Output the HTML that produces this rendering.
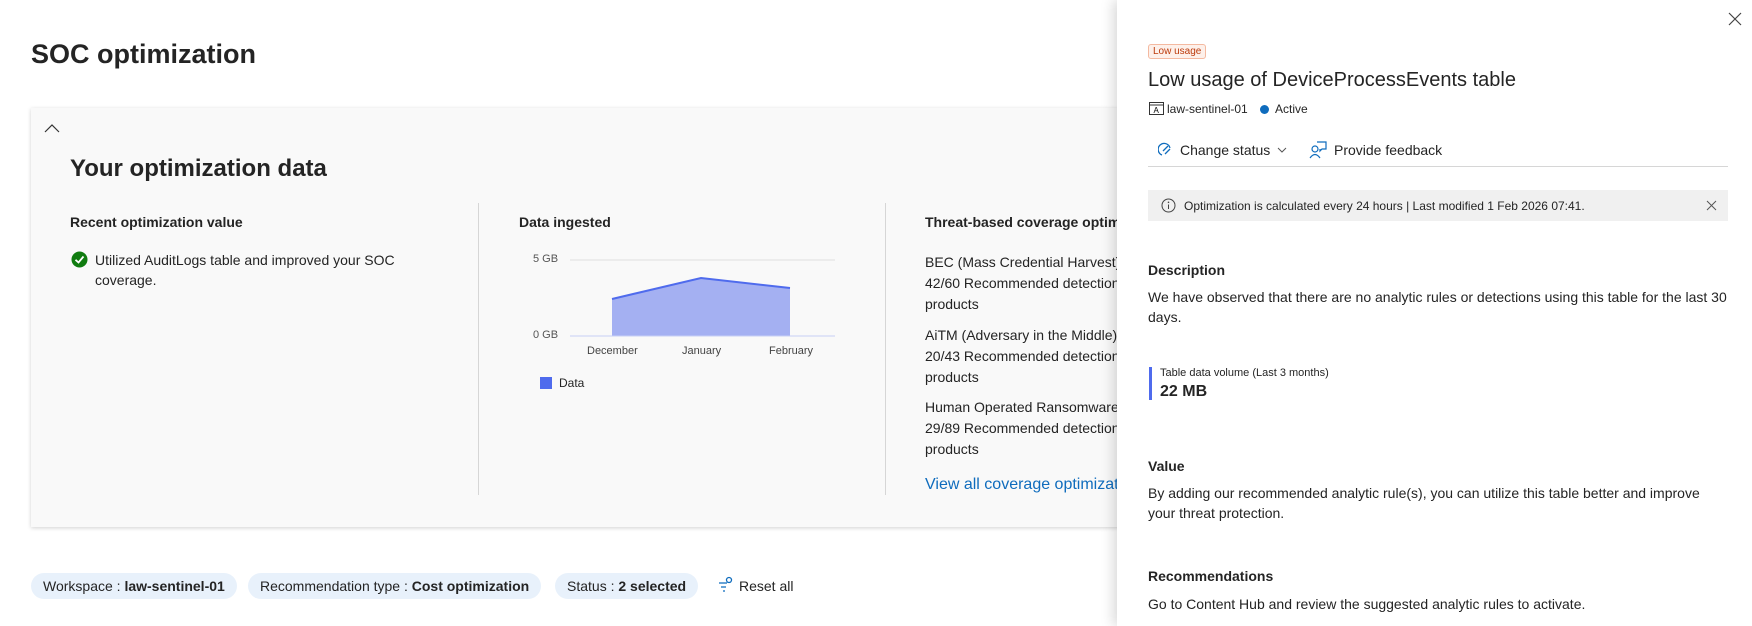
<!DOCTYPE html>
<html><head><meta charset="utf-8"><style>
*{margin:0;padding:0;box-sizing:border-box}
body{width:1752px;height:626px;overflow:hidden;background:#fff;font-family:"Liberation Sans",sans-serif;color:#242424;position:relative}
.a{position:absolute;white-space:nowrap}
.card{position:absolute;left:31px;top:108px;width:1100px;height:419px;background:#f9f9f9;box-shadow:0 1px 4px rgba(0,0,0,.18)}
.h{font-weight:bold;font-size:14px}
.t{font-size:14px;line-height:20px}
.pill{position:absolute;top:573px;height:26px;border-radius:13px;background:#e8f1fb;font-size:14px;line-height:26px;padding:0 12px}
.panel{position:absolute;left:1117px;top:0;width:635px;height:626px;background:#fff;box-shadow:-4px 0 12px rgba(0,0,0,.15)}
</style></head><body>
<div class="a" style="left:31px;top:39px;font-size:27px;font-weight:bold">SOC optimization</div>
<div class="card">
<svg class="a" style="left:12px;top:14px" width="18" height="12"><path d="M2 10 L9 3 L16 10" stroke="#333" fill="none" stroke-width="1.2"/></svg>
<div class="a" style="left:39px;top:47px;font-size:24px;font-weight:bold">Your optimization data</div>
<div class="a h" style="left:39px;top:106px">Recent optimization value</div>
<svg class="a" style="left:40px;top:143px" width="17" height="17"><circle cx="8.5" cy="8.5" r="8" fill="#107c10"/><path d="M4.5 8.8 L7.5 11.5 L12.5 5.5" stroke="#fff" stroke-width="1.8" fill="none"/></svg>
<div class="a t" style="left:64px;top:142px">Utilized AuditLogs table and improved your SOC<br>coverage.</div>
<div class="a" style="left:447px;top:95px;width:1px;height:292px;background:#d6d6d6"></div>
<div class="a" style="left:854px;top:95px;width:1px;height:292px;background:#d6d6d6"></div>
<div class="a h" style="left:488px;top:106px">Data ingested</div>
<div class="a" style="left:502px;top:145px;font-size:11px;color:#555">5 GB</div>
<div class="a" style="left:502px;top:221px;font-size:11px;color:#555">0 GB</div>
<svg class="a" style="left:539px;top:150px" width="270" height="90"><line x1="0" y1="2" x2="265" y2="2" stroke="#e0e0e0"/><polygon points="42,41 131,20 220,30 220,78 42,78" fill="#a4b0f2"/><polyline points="42,41 131,20 220,30" stroke="#4f6bed" stroke-width="2" fill="none"/><line x1="0" y1="78" x2="265" y2="78" stroke="#c8d0f5"/></svg>
<div class="a" style="left:556px;top:237px;font-size:11px;color:#444">December</div>
<div class="a" style="left:651px;top:237px;font-size:11px;color:#444">January</div>
<div class="a" style="left:738px;top:237px;font-size:11px;color:#444">February</div>
<div class="a" style="left:509px;top:269px;width:12px;height:12px;background:#4f6bed"></div>
<div class="a" style="left:528px;top:268px;font-size:12px">Data</div>
<div class="a h" style="left:894px;top:106px">Threat-based coverage optimization</div>
<div class="a t" style="left:894px;top:144px;line-height:21px">BEC (Mass Credential Harvest) | Identity<br>42/60 Recommended detections active across<br>products</div>
<div class="a t" style="left:894px;top:217px;line-height:21px">AiTM (Adversary in the Middle) | Identity<br>20/43 Recommended detections active across<br>products</div>
<div class="a t" style="left:894px;top:289px;line-height:21px">Human Operated Ransomware | Endpoint<br>29/89 Recommended detections active across<br>products</div>
<div class="a" style="left:894px;top:368px;font-size:16px;color:#0f6cbd">View all coverage optimizations</div>
</div>
<div class="pill" style="left:31px">Workspace : <b>law-sentinel-01</b></div>
<div class="pill" style="left:248px">Recommendation type : <b>Cost optimization</b></div>
<div class="pill" style="left:555px">Status : <b>2 selected</b></div>
<svg class="a" style="left:717px;top:576px" width="16" height="18"><path d="M2 7h8M4 11h5M6 15h2" stroke="#0f6cbd" stroke-width="1.3"/><circle cx="12" cy="4" r="2.5" stroke="#0f6cbd" fill="none" stroke-width="1.3"/></svg>
<div class="a" style="left:739px;top:578px;font-size:14px">Reset all</div>
<div class="panel">
<svg class="a" style="left:611px;top:12px" width="14" height="14"><path d="M1 1L13 13M13 1L1 13" stroke="#444" stroke-width="1.2"/></svg>
<div class="a" style="left:31px;top:44px;height:15px;padding:0 4px;border:1px solid #f4b9a0;background:#fdf0ea;color:#bc3b0c;font-size:10px;line-height:13px;border-radius:3px">Low usage</div>
<div class="a" style="left:31px;top:69px;font-size:20px">Low usage of DeviceProcessEvents table</div>
<svg class="a" style="left:32px;top:102px" width="15" height="13"><rect x="0.5" y="0.5" width="14" height="12" fill="none" stroke="#333"/><line x1="0.5" y1="3" x2="14.5" y2="3" stroke="#333"/><text x="4.5" y="11" font-size="8" font-family="Liberation Sans">A</text></svg>
<div class="a" style="left:50px;top:102px;font-size:12px">law-sentinel-01</div>
<div class="a" style="left:143px;top:105px;width:9px;height:9px;border-radius:50%;background:#0f6cbd"></div>
<div class="a" style="left:158px;top:102px;font-size:12px">Active</div>
<svg class="a" style="left:41px;top:142px" width="15" height="16"><path d="M4 13 A6 6 0 1 1 12 6 M5 9 L10 4 M7 12 L12 7" stroke="#0f6cbd" fill="none" stroke-width="1.3"/></svg>
<div class="a" style="left:63px;top:142px;font-size:14px">Change status</div>
<svg class="a" style="left:160px;top:146px" width="10" height="8"><path d="M1 2L5 6L9 2" stroke="#555" fill="none"/></svg>
<svg class="a" style="left:192px;top:140px" width="18" height="19"><circle cx="6" cy="9" r="3" stroke="#0f6cbd" fill="none" stroke-width="1.2"/><path d="M1 18 Q6 11 11 18" stroke="#0f6cbd" fill="none" stroke-width="1.2"/><path d="M8 2h9v7h-4l-2 2V9" stroke="#0f6cbd" fill="none" stroke-width="1.2"/></svg>
<div class="a" style="left:217px;top:142px;font-size:14px">Provide feedback</div>
<div class="a" style="left:31px;top:166px;width:580px;height:1px;background:#d6d6d6"></div>
<div class="a" style="left:31px;top:190px;width:580px;height:31px;background:#f0f0f0"></div>
<svg class="a" style="left:44px;top:198px" width="15" height="15"><circle cx="7.5" cy="7.5" r="6.5" stroke="#444" fill="none"/><path d="M7.5 6.5v4.5" stroke="#444"/><circle cx="7.5" cy="4.3" r=".8" fill="#444"/></svg>
<div class="a" style="left:67px;top:199px;font-size:12px">Optimization is calculated every 24 hours | Last modified 1 Feb 2026 07:41.</div>
<svg class="a" style="left:589px;top:200px" width="11" height="11"><path d="M1 1L10 10M10 1L1 10" stroke="#555"/></svg>
<div class="a h" style="left:31px;top:262px">Description</div>
<div class="a t" style="left:31px;top:287px">We have observed that there are no analytic rules or detections using this table for the last 30<br>days.</div>
<div class="a" style="left:32px;top:367px;width:3px;height:33px;background:#4f6bed"></div>
<div class="a" style="left:43px;top:367px;font-size:11px">Table data volume (Last 3 months)</div>
<div class="a" style="left:43px;top:383px;font-size:16px;font-weight:bold">22 MB</div>
<div class="a h" style="left:31px;top:458px">Value</div>
<div class="a t" style="left:31px;top:483px">By adding our recommended analytic rule(s), you can utilize this table better and improve<br>your threat protection.</div>
<div class="a h" style="left:31px;top:568px">Recommendations</div>
<div class="a t" style="left:31px;top:594px">Go to Content Hub and review the suggested analytic rules to activate.</div>
</div>
</body></html>
